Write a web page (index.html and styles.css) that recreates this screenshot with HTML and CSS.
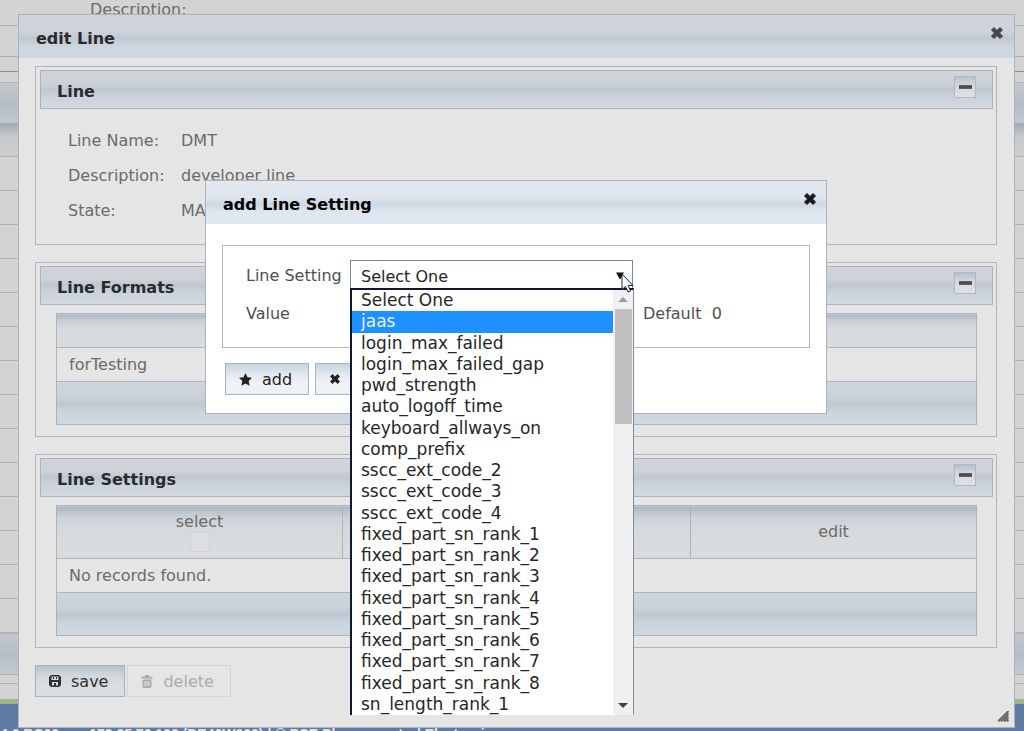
FILE: index.html
```html
<!DOCTYPE html>
<html lang="en">
<head>
<meta charset="utf-8">
<title>edit Line</title>
<link rel="stylesheet" href="styles.css">
</head>
<body>
<svg class="sprite" aria-hidden="true">
  <symbol id="i-close" viewBox="0 0 12 12"><path d="M3 0.5 6 3.5 9 0.5 11.5 3 8.5 6 11.5 9 9 11.5 6 8.5 3 11.5 0.5 9 3.5 6 0.5 3Z" stroke="currentColor" stroke-width="1" stroke-linejoin="round"/></symbol>
  <symbol id="i-minus" viewBox="0 0 14 4"><path d="M0 0H14V4H0Z"/></symbol>
</svg>

<main class="page">
  <div class="page-field">Description:</div>
  <div class="page-strip"></div>
  <div class="page-strip page-strip-dark"></div>
  <div class="page-gap"></div>
  <div class="page-bar"></div>
  <div class="page-head"></div>
  <div class="page-rows">
    <div></div><div></div><div></div><div></div><div></div><div></div><div></div>
    <div></div><div></div><div></div><div></div><div></div><div></div><div></div>
  </div>
  <div class="page-bar"></div>
  <div class="page-tail"></div>
  <div class="page-end"></div>
  <footer class="page-footer"><span>4.0.RC00</span><span>172.25.70.100 (DE40W000) | © PCE Pharmacontrol Electronic</span></footer>
</main>

<div class="dialog dialog-edit" role="dialog" aria-labelledby="edit-title">
  <header class="dialog-title">
    <h1 id="edit-title">edit Line</h1>
    <button class="close" type="button" aria-label="Close"><svg width="12" height="12"><use href="#i-close"/></svg></button>
  </header>
  <div class="dialog-body">
    <section class="panel">
      <header class="panel-title"><h2>Line</h2><button class="toggle" type="button" aria-label="Collapse Line"><svg width="13" height="4"><use href="#i-minus"/></svg></button></header>
      <dl class="details">
        <dt>Line Name:</dt><dd>DMT</dd>
        <dt>Description:</dt><dd>developer line</dd>
        <dt>State:</dt><dd>MA</dd>
      </dl>
    </section>

    <section class="panel">
      <header class="panel-title"><h2>Line Formats</h2><button class="toggle" type="button" aria-label="Collapse Line Formats"><svg width="13" height="4"><use href="#i-minus"/></svg></button></header>
      <div class="panel-body">
        <table class="grid">
          <thead><tr><th></th></tr></thead>
          <tbody><tr><td>forTesting</td></tr></tbody>
        </table>
        <div class="grid-footer"></div>
      </div>
    </section>

    <section class="panel">
      <header class="panel-title"><h2>Line Settings</h2><button class="toggle" type="button" aria-label="Collapse Line Settings"><svg width="13" height="4"><use href="#i-minus"/></svg></button></header>
      <div class="panel-body">
        <table class="grid grid-settings">
          <colgroup><col class="col-side"><col><col class="col-side"></colgroup>
          <thead><tr><th><label for="select-all">select</label><input id="select-all" type="checkbox" disabled></th><th></th><th>edit</th></tr></thead>
          <tbody><tr><td colspan="3">No records found.</td></tr></tbody>
        </table>
        <div class="grid-footer"></div>
      </div>
    </section>

    <div class="actions">
      <button class="btn" type="button"><svg width="12" height="12" viewBox="0 0 12 12"><path fill-rule="evenodd" d="M2 0H10L12 2V10L10 12H2L0 10V2ZM2.500 1.500V5H9.500V1.500ZM3 7V10.500H5V8H7V10.500H9V7Z"/><path d="M4 2H5V4H4ZM7 2H8V4H7Z"/></svg>save</button>
      <button class="btn" type="button" disabled><svg width="12" height="13" viewBox="0 0 12 13"><path fill-rule="evenodd" d="M4 0H8V1.500H11.500V3.500H0.500V1.500H4ZM1.500 4.500H10.500V11.500L9.500 13H2.500L1.500 11.500ZM3.500 6V11H4.500V6ZM5.500 6V11H6.500V6ZM7.500 6V11H8.500V6Z"/></svg>delete</button>
    </div>
  </div>
  <svg class="grip" width="11" height="11" viewBox="0 0 11 11" aria-hidden="true"><path d="M0 10.500 10.500 0M3 10.500 10.500 3M6 10.500 10.500 6M8.500 10.500 10.500 8.500"/></svg>
</div>

<div class="dialog dialog-add" role="dialog" aria-labelledby="add-title">
  <header class="dialog-title">
    <h1 id="add-title">add Line Setting</h1>
    <button class="close" type="button" aria-label="Close"><svg width="12" height="12"><use href="#i-close"/></svg></button>
  </header>
  <form class="add-form">
    <div class="fields">
      <label for="setting">Line Setting</label>
      <div class="combo">
        <select id="setting"><option>Select One</option></select>
        <div class="menu">
          <ul class="options" role="listbox" aria-label="Line Setting">
            <li role="option">Select One</li>
            <li role="option" class="active" aria-selected="true">jaas</li>
            <li role="option">login_max_failed</li>
            <li role="option">login_max_failed_gap</li>
            <li role="option">pwd_strength</li>
            <li role="option">auto_logoff_time</li>
            <li role="option">keyboard_allways_on</li>
            <li role="option">comp_prefix</li>
            <li role="option">sscc_ext_code_2</li>
            <li role="option">sscc_ext_code_3</li>
            <li role="option">sscc_ext_code_4</li>
            <li role="option">fixed_part_sn_rank_1</li>
            <li role="option">fixed_part_sn_rank_2</li>
            <li role="option">fixed_part_sn_rank_3</li>
            <li role="option">fixed_part_sn_rank_4</li>
            <li role="option">fixed_part_sn_rank_5</li>
            <li role="option">fixed_part_sn_rank_6</li>
            <li role="option">fixed_part_sn_rank_7</li>
            <li role="option">fixed_part_sn_rank_8</li>
            <li role="option">sn_length_rank_1</li>
          </ul>
          <div class="scrollbar" aria-hidden="true">
            <svg class="up" width="10" height="5" viewBox="0 0 10 5"><path d="M0 5 5 0 10 5Z"/></svg>
            <div class="thumb"></div>
            <svg class="down" width="10" height="5" viewBox="0 0 10 5"><path d="M0 0H10L5 5Z"/></svg>
          </div>
        </div>
        <svg class="arrow" width="8" height="8" viewBox="0 0 8 8" aria-hidden="true"><path d="M0 0.500H8L4 7.500Z"/></svg>
        <svg class="pointer" width="13" height="20" viewBox="0 0 13 20" aria-hidden="true"><path d="M1 1V16.500L4.500 13.500 7 19 9.500 18 7.200 12.500H12Z"/></svg>
      </div>
      <span></span>
      <label for="value">Value</label>
      <input class="value" id="value" type="text">
      <span class="default">Default&nbsp; 0</span>
    </div>
    <div class="add-actions">
      <button class="btn" type="button"><svg width="13" height="13" viewBox="0 0 13 13"><path d="M6.500 0 8.500 4.300 13 4.800 9.700 8 10.600 12.700 6.500 10.400 2.400 12.700 3.300 8 0 4.800 4.500 4.300Z"/></svg>add</button>
      <button class="btn btn-cancel" type="button" aria-label="cancel"><svg width="10" height="10"><use href="#i-close"/></svg></button>
    </div>
  </form>
</div>
</body>
</html>
```

FILE: styles.css
```css
* { box-sizing: border-box; }

body {
  margin: 0;
  min-height: 100vh;
  position: relative;
  overflow: hidden;
  background: #d3d3d3;
  color: #6b6b6b;
  font: 16px/20px "DejaVu Sans", Verdana, sans-serif;
}

h1, h2, dl, dd, ul { margin: 0; padding: 0; }
h1, h2 { font-size: 16px; line-height: 20px; color: #2b2b2e; }
button, input, select { font: inherit; }
svg { fill: currentColor; flex: none; }
.sprite { position: absolute; width: 0; height: 0; }

/* page behind the dialogs */
.page { height: 100vh; overflow: hidden; }
.page-field { height: 26px; padding-left: 90px; border-bottom: 1px solid #b0b2b5; }
.page-strip { height: 31px; border-bottom: 1px solid #aaadb0; }
.page-strip-dark { height: 15px; border-color: #8a8c8e; }
.page-gap { height: 10px; }
.page-bar {
  height: 41px;
  border-top: 1px solid #aeb5bd;
  background: linear-gradient(#c3c7cb, #b4bdc6 50%, #c1c9d0);
}
.page-head {
  height: 34px;
  border-bottom: 1px solid #aeb1b6;
  background: linear-gradient(#9faab5, #c6c9cc 40%, #cbcccd);
}
.page-rows div { height: 34px; border-bottom: 1px solid #afb1b5; }
.page-tail { height: 10px; border-block: 1px solid #afb1b5; }
.page-end { height: 15px; }
.page-footer {
  display: flex;
  gap: 30px;
  height: 40px;
  padding-top: 20px;
  border-top: 5px solid #9bb583;
  background: #607ba3;
  color: #e1e5eb;
  font: bold 14px/20px "Liberation Sans", Arial, sans-serif;
  white-space: nowrap;
}

/* dialogs */
.dialog { position: absolute; border: 1px solid #a9b2be; }
.dialog-edit { top: 14px; left: 18px; right: 9px; background: #e5e5e5; }
.dialog-add { top: 180px; left: 205px; width: 622px; background: #fff; color: #4f4f4f; }
.dialog-title {
  display: flex;
  align-items: center;
  justify-content: space-between;
  height: 43px;
  padding: 4px 11px 0 17px;
  background: linear-gradient(#d0d4da, #cdd2d9 40%, #bfc8d0 54%, #cdd5dd 72%, #d0d8df);
}
.dialog-add .dialog-title {
  padding-right: 10px;
  background: linear-gradient(#e1e8ee, #dde5ed 40%, #cbd8e3 54%, #dee7ef 72%, #e1eaf2);
}
.dialog-add h1 { color: #000; }
.close {
  display: flex;
  align-self: flex-start;
  padding: 8px 0;
  border: 0;
  background: none;
  color: #46464a;
}
.dialog-add .close { color: #18181c; }
.dialog-body { display: flex; flex-direction: column; gap: 17px; padding: 8px 17px 30px 16px; }

.panel { padding: 3px 3px 3px 4px; border: 1px solid #b0b5bd; }
.panel-title {
  display: flex;
  align-items: center;
  justify-content: space-between;
  height: 39px;
  padding: 4px 16px 0;
  border: 1px solid #aab3bf;
  background: linear-gradient(#d1d5da, #ccd1d8 35%, #bfc7d0 50%, #cbd3dc 70%, #d1d8e0);
}
.toggle {
  display: flex;
  align-items: center;
  justify-content: center;
  width: 22px;
  height: 22px;
  margin-top: -10px;
  padding: 0;
  border: 1px solid #b1bac4;
  background: linear-gradient(#b9c3cd, #d5dade 50%, #dfe1e3);
  color: #4b4d51;
}
.details {
  display: grid;
  grid-template-columns: 113px 1fr;
  padding: 14px 28px 13px;
  line-height: 35px;
}
.panel-body { padding: 8px 16px; }

.grid { width: 100%; border-collapse: collapse; table-layout: fixed; }
.col-side { width: 286px; }
.grid th, .grid td { padding: 0 12px; border: 1px solid #acb5bf; font-weight: normal; }
.grid th {
  height: 34px;
  background: linear-gradient(#a9b6c2, #c9d0d7 20%, #d7dadd 45%, #d9dbdd);
}
.grid td { height: 34px; text-align: left; }
.grid-settings th { height: 53px; }
.grid th label { display: block; line-height: 20px; }
.grid th input {
  display: block;
  appearance: none;
  width: 20px;
  height: 20px;
  margin: 0 auto;
  border: 1px solid #cfd3d6;
  background: #dcdee0;
}
.grid-footer {
  height: 43px;
  border: 1px solid #a9b3be;
  border-top: 0;
  background: linear-gradient(#cfd5dc, #cad0d8 38%, #bec7d0 50%, #cbd3dc 70%, #d0d8e0);
}

.actions { display: flex; gap: 2px; }
.btn {
  display: flex;
  align-items: center;
  gap: 10px;
  height: 32px;
  padding: 2px 16px 0 13px;
  border: 1px solid #a7b4c1;
  background: linear-gradient(#b5c2cd, #cfd6dc 30%, #dadddf 60%, #dcdfe1);
  color: #303134;
}
.btn svg { margin-top: -2px; }
.btn:disabled { border-color: #d0d4d8; background: #e5e5e5; color: #acacac; }
.btn-cancel { width: 104px; padding-left: 14px; }
.grip {
  position: absolute;
  right: 5px;
  bottom: 5px;
  fill: none;
  stroke: #6c6c6c;
  stroke-width: 2;
}

/* add form */
.add-form { padding: 21px 16px 18px; }
.fields {
  display: grid;
  grid-template-columns: 104px 283px auto;
  grid-template-rows: 31px 30px;
  row-gap: 8px;
  align-items: center;
  padding: 14px 23px 18px;
  border: 1px solid #b5b9be;
}
.fields label { white-space: nowrap; }
.combo { position: relative; align-self: start; }
.combo select {
  display: block;
  appearance: none;
  width: 100%;
  height: 31px;
  padding: 2px 10px 0;
  border: 1px solid #7186ac;
  border-radius: 0;
  background: #fff;
  color: #262626;
}
.value { width: 180px; height: 28px; border: 1px solid #a9b5c2; }
.default { padding-left: 10px; }
.arrow { position: absolute; top: 12px; right: 9px; color: #111; }
.pointer {
  position: absolute;
  top: 13px;
  right: -1px;
  z-index: 2;
  fill: #fff;
  stroke: #17233c;
}
.menu {
  position: absolute;
  top: 28px;
  left: 0;
  right: -1px;
  z-index: 1;
  display: flex;
  height: 427px;
  border: solid #11182c;
  border-width: 2px 1px 0 2px;
  border-right-color: #7c90aa;
  background: #fff;
}
.options {
  flex: 1;
  display: grid;
  grid-auto-rows: 1fr;
  align-items: stretch;
  list-style: none;
  color: #262626;
  font-size: 17px;
  line-height: 21px;
}
.options li { padding-left: 9px; white-space: nowrap; }
.options .active { background: #1e90ff; color: #e8f4ff; }
.scrollbar {
  display: flex;
  flex-direction: column;
  align-items: center;
  width: 20px;
  padding: 7px 0;
  background: #f0f0f0;
}
.up { color: #9b9b9b; }
.down { margin-top: auto; color: #444; }
.thumb { width: 17px; height: 115px; margin-top: 7px; background: #c0c0c0; }
.add-actions { display: flex; gap: 6px; padding: 15px 3px 0; }
.dialog-add .btn {
  background: linear-gradient(#c6d4e0, #e2e9f0 35%, #eff2f6 65%, #edf1f5);
  color: #222;
}
```
